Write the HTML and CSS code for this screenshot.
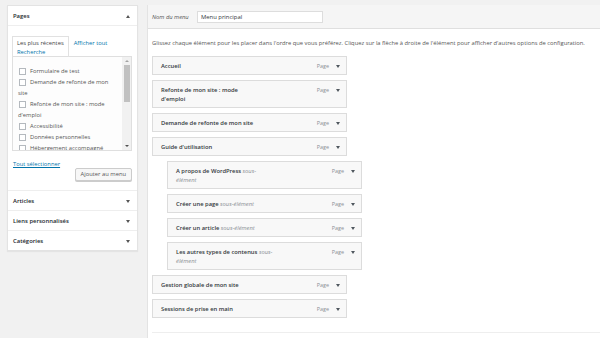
FILE: index.html
```html
<!DOCTYPE html>
<html lang="fr">
<head>
<meta charset="utf-8">
<title>Menus</title>
<link rel="stylesheet" href="styles.css">
</head>
<body>
<div class="page">
  <aside class="sidebar">
    <section class="box">
      <header class="box-head"><h3>Pages</h3><span class="tri up"></span></header>
      <div class="box-body">
        <div class="tabs"><span class="tab">Les plus récentes</span><a class="tablink" href="#">Afficher tout</a> <a class="tablink" href="#">Recherche</a></div>
        <div class="checklist">
          <ul class="items">
            <li><span class="cb"></span>Formulaire de test</li>
            <li><span class="cb"></span>Demande de refonte de mon site</li>
            <li><span class="cb"></span>Refonte de mon site : mode d'emploi</li>
            <li><span class="cb"></span>Accessibilité</li>
            <li><span class="cb"></span>Données personnelles</li>
            <li><span class="cb"></span>Hébergement accompagné</li>
          </ul>
          <div class="scrollbar"><span class="sb-up"></span><span class="sb-thumb"></span><span class="sb-track"></span><span class="sb-down"></span></div>
        </div>
        <div class="select-all"><a href="#">Tout sélectionner</a></div>
        <div class="actions"><button class="btn" type="button">Ajouter au menu</button></div>
      </div>
    </section>
    <section class="box closed">
      <header class="box-head"><h3>Articles</h3><span class="tri down"></span></header>
    </section>
    <section class="box closed">
      <header class="box-head"><h3>Liens personnalisés</h3><span class="tri down"></span></header>
    </section>
    <section class="box closed">
      <header class="box-head"><h3>Catégories</h3><span class="tri down"></span></header>
    </section>
  </aside>

  <main class="editor">
    <div class="editor-head">
      <label class="name-label" for="menu-name">Nom du menu</label>
      <input class="name-input" id="menu-name" type="text" value="Menu principal">
    </div>
    <div class="editor-body">
      <p class="hint">Glissez chaque élément pour les placer dans l'ordre que vous préférez. Cliquez sur la flèche à droite de l'élément pour afficher d'autres options de configuration.</p>
      <ul class="menu">
        <li class="item"><span class="title">Accueil</span><span class="type">Page</span><span class="caret"></span></li>
        <li class="item"><span class="title">Refonte de mon site : mode d'emploi</span><span class="type">Page</span><span class="caret"></span></li>
        <li class="item"><span class="title">Demande de refonte de mon site</span><span class="type">Page</span><span class="caret"></span></li>
        <li class="item"><span class="title">Guide d'utilisation</span><span class="type">Page</span><span class="caret"></span></li>
        <li class="item sub"><span class="title">A propos de WordPress <em>sous-élément</em></span><span class="type">Page</span><span class="caret"></span></li>
        <li class="item sub"><span class="title">Créer une page <em>sous-élément</em></span><span class="type">Page</span><span class="caret"></span></li>
        <li class="item sub"><span class="title">Créer un article <em>sous-élément</em></span><span class="type">Page</span><span class="caret"></span></li>
        <li class="item sub"><span class="title">Les autres types de contenus <em>sous-élément</em></span><span class="type">Page</span><span class="caret"></span></li>
        <li class="item"><span class="title">Gestion globale de mon site</span><span class="type">Page</span><span class="caret"></span></li>
        <li class="item"><span class="title">Sessions de prise en main</span><span class="type">Page</span><span class="caret"></span></li>
      </ul>
      <div class="editor-foot"></div>
    </div>
  </main>
</div>
</body>
</html>
```

FILE: styles.css
```css
* { box-sizing: border-box; }

html, body {
  margin: 0;
  padding: 0;
  background: #f1f1f1;
  overflow: hidden;
}

body {
  font-family: "Open Sans", "Noto Sans", sans-serif;
  font-size: 5.8px;
  color: #555;
  width: 600px;
  height: 338px;
}

.page {
  display: flex;
  align-items: flex-start;
  gap: 9px;
  padding: 5px 0 0 7px;
}

/* ---------- sidebar ---------- */
.sidebar {
  width: 131px;
  flex: none;
  background: #fff;
  border: 1px solid #e3e3e3;
  box-shadow: 0 1px 1px rgba(0, 0, 0, 0.05);
}

.box + .box .box-head { border-top: 1px solid #eee; }
.box:first-child .box-head { border-bottom: 1px solid #eee; }

.box-head {
  height: 20px;
  display: flex;
  align-items: center;
  justify-content: space-between;
  padding: 1px 7px 0 5px;
}

.box-head h3 {
  margin: 0;
  font-size: 5.9px;
  font-weight: 600;
  color: #23282d;
}

.tri {
  width: 0;
  height: 0;
  border-left: 2.5px solid transparent;
  border-right: 2.5px solid transparent;
}
.tri.up { border-bottom: 3px solid #555; }
.tri.down { border-top: 3px solid #555; }

.box-body {
  padding: 13px 5px 9px 4px;
}

.tabs {
  padding-left: 5px;
  line-height: 9px;
  height: 17px;
}

.tab {
  margin-left: -5px;
  padding: 2px 4px 10px 4px;
  border: 1px solid #e1e1e1;
  border-bottom: 0;
  color: #444;
}

.tablink {
  color: #0073aa;
  text-decoration: none;
  margin-left: 5px;
}
.tablink + .tablink { margin-left: 0; }

.checklist {
  display: flex;
  height: 95px;
  border: 1px solid #dfdfdf;
  background: #fdfdfd;
  overflow: hidden;
}

.items {
  flex: 1;
  list-style: none;
  margin: 0;
  padding: 9px 6px 0 5px;
  line-height: 11px;
  color: #555;
}

.cb {
  display: inline-block;
  width: 7px;
  height: 7px;
  border: 1px solid #b4b9be;
  background: #fff;
  margin: 0 4px 0 1px;
  vertical-align: -1.5px;
}

.scrollbar {
  width: 9px;
  flex: none;
  background: #f1f1f1;
  display: flex;
  flex-direction: column;
  align-items: center;
  padding: 3px 0;
}

.sb-up, .sb-down {
  width: 0;
  height: 0;
  border-left: 2px solid transparent;
  border-right: 2px solid transparent;
}
.sb-up { border-bottom: 2.5px solid #a3a3a3; }
.sb-down { border-top: 2.5px solid #505050; }

.sb-thumb {
  width: 6px;
  height: 37px;
  margin-top: 3px;
  background: #c1c1c1;
}
.sb-track { flex: 1; }

.select-all {
  margin-top: 9px;
  line-height: 9px;
  padding-left: 1px;
}
.select-all a {
  color: #0073aa;
  text-decoration: underline;
}

.actions {
  display: flex;
  justify-content: flex-end;
  margin-top: -1px;
}

.btn {
  height: 13px;
  padding: 0 5px;
  font-family: inherit;
  font-size: 5.8px;
  color: #555;
  background: #f7f7f7;
  border: 1px solid #ccc;
  border-radius: 2px;
  box-shadow: 0 1px 0 #ccc;
  line-height: 11px;
}

/* ---------- editor ---------- */
.editor {
  flex: 1;
  min-width: 0;
  height: 340px;
  background: #fff;
  border-left: 1px solid #e3e3e3;
  border-top: 1px solid #e3e3e3;
}

.editor-head {
  height: 24px;
  display: flex;
  align-items: center;
  background: #f5f5f5;
  border-bottom: 1px solid #dfdfdf;
  padding: 1px 0 0 4px;
  margin-top: -1px;
}

.name-label {
  width: 45px;
  font-style: italic;
  color: #555;
}

.name-input {
  width: 126px;
  height: 12px;
  border: 1px solid #ddd;
  background: #fff;
  padding: 0 3px;
  font-family: inherit;
  font-size: 5.9px;
  color: #32373c;
  outline: none;
}

.editor-body {
  padding: 10px 0 0 4px;
}

.hint {
  margin: 0 0 8px;
  line-height: 9px;
  white-space: nowrap;
  color: #555;
}

.menu {
  list-style: none;
  margin: 0;
  padding: 0;
  display: flex;
  flex-direction: column;
  gap: 5px;
}

.item {
  width: 195px;
  display: flex;
  align-items: flex-start;
  padding: 5px 6px 3px 8px;
  border: 1px solid #dcdcdc;
  background: #f8f8f8;
  line-height: 9px;
}

.item.sub { margin-left: 15px; }

.title {
  width: 100px;
  font-weight: 600;
  color: #32373c;
}

.title em {
  font-weight: 400;
  font-style: italic;
  color: #8a8f94;
}

.type {
  margin-left: auto;
  color: #8a8f94;
  font-size: 5.4px;
}

.caret {
  width: 0;
  height: 0;
  margin: 3px 0 0 7px;
  border-left: 2.5px solid transparent;
  border-right: 2.5px solid transparent;
  border-top: 3px solid #50575e;
}

.editor-foot {
  margin-top: 14px;
  border-top: 1px solid #eee;
  height: 10px;
}
```
